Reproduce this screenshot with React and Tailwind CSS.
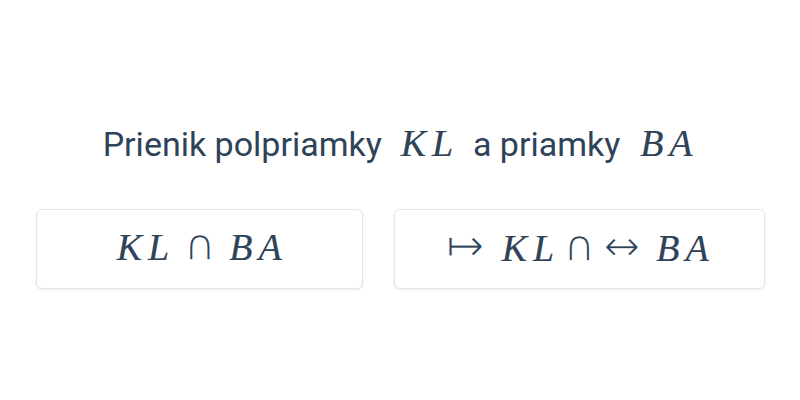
const serif = { fontFamily: '"Liberation Serif", "DejaVu Serif", serif' };
const sym = { fontFamily: '"DejaVu Sans", sans-serif' };

// premenná v matematickom režime (kurzíva, široké medzery)
function M({ children, w, ml = "" }) {
    return (
        <span className={`inline-flex justify-center ${w} ${ml}`}>
            <span
                className="italic tracking-[6px] mr-[-6px] text-[38px] [-webkit-text-stroke:0.2px_#2e4258]"
                style={serif}
            >
                {children}
            </span>
        </span>
    );
}

// tenké matematické symboly
function Sym({ children, w, ml = "", size = "text-[44px]" }) {
    return (
        <span className={`inline-flex justify-center ${w} ${ml}`}>
            <span className={`${size} [-webkit-text-stroke:1.5px_white]`} style={sym}>
                {children}
            </span>
        </span>
    );
}

const options = [
    {
        width: "w-[327px]",
        content: [
            <M key="a" w="w-[60px]">KL</M>,
            <Sym key="b" w="w-[23px]" ml="ml-[15px]">∩</Sym>,
            <M key="c" w="w-[59px]" ml="ml-[15px]">BA</M>,
        ],
    },
    {
        width: "w-[371px]",
        content: [
            <Sym key="a" w="w-[38px]" size="text-[46px]">↦</Sym>,
            <M key="b" w="w-[58px]" ml="ml-[15px]">KL</M>,
            <Sym key="c" w="w-[24px]" ml="ml-[10px]">∩</Sym>,
            <Sym key="d" w="w-[34px]" ml="ml-[14px]" size="text-[44px]">↔</Sym>,
            <M key="e" w="w-[59px]" ml="ml-[14px]">BA</M>,
        ],
    },
];

export default function App() {
    return (
        <div
            className="w-[800px] h-[400px] bg-white flex flex-col items-center text-[#2e4258]"
            style={{ fontFamily: 'Roboto, "Liberation Sans", sans-serif' }}
        >
            {/* Otázka */}
            <h1 className="mt-[121px] h-[44px] flex items-baseline text-[34px] leading-[44px] font-normal">
                <span>Prienik polpriamky</span>
                <M w="w-[62px]" ml="ml-[14px]">KL</M>
                <span className="ml-[15px]">a priamky</span>
                <M w="w-[62px]" ml="ml-[15px]">BA</M>
            </h1>

            {/* Odpovede */}
            <div className="mt-[44px] flex gap-[31px]">
                {options.map((opt, idx) => (
                    <button
                        key={idx}
                        className={`${opt.width} h-[80px] bg-white border border-[#e2e4e8] rounded-[6px] shadow-[0_1px_3px_rgba(0,0,0,0.08)] flex items-baseline justify-center pt-[13px] leading-[44px] text-[#2e4258]`}
                    >
                        {opt.content}
                    </button>
                ))}
            </div>
        </div>
    );
}
